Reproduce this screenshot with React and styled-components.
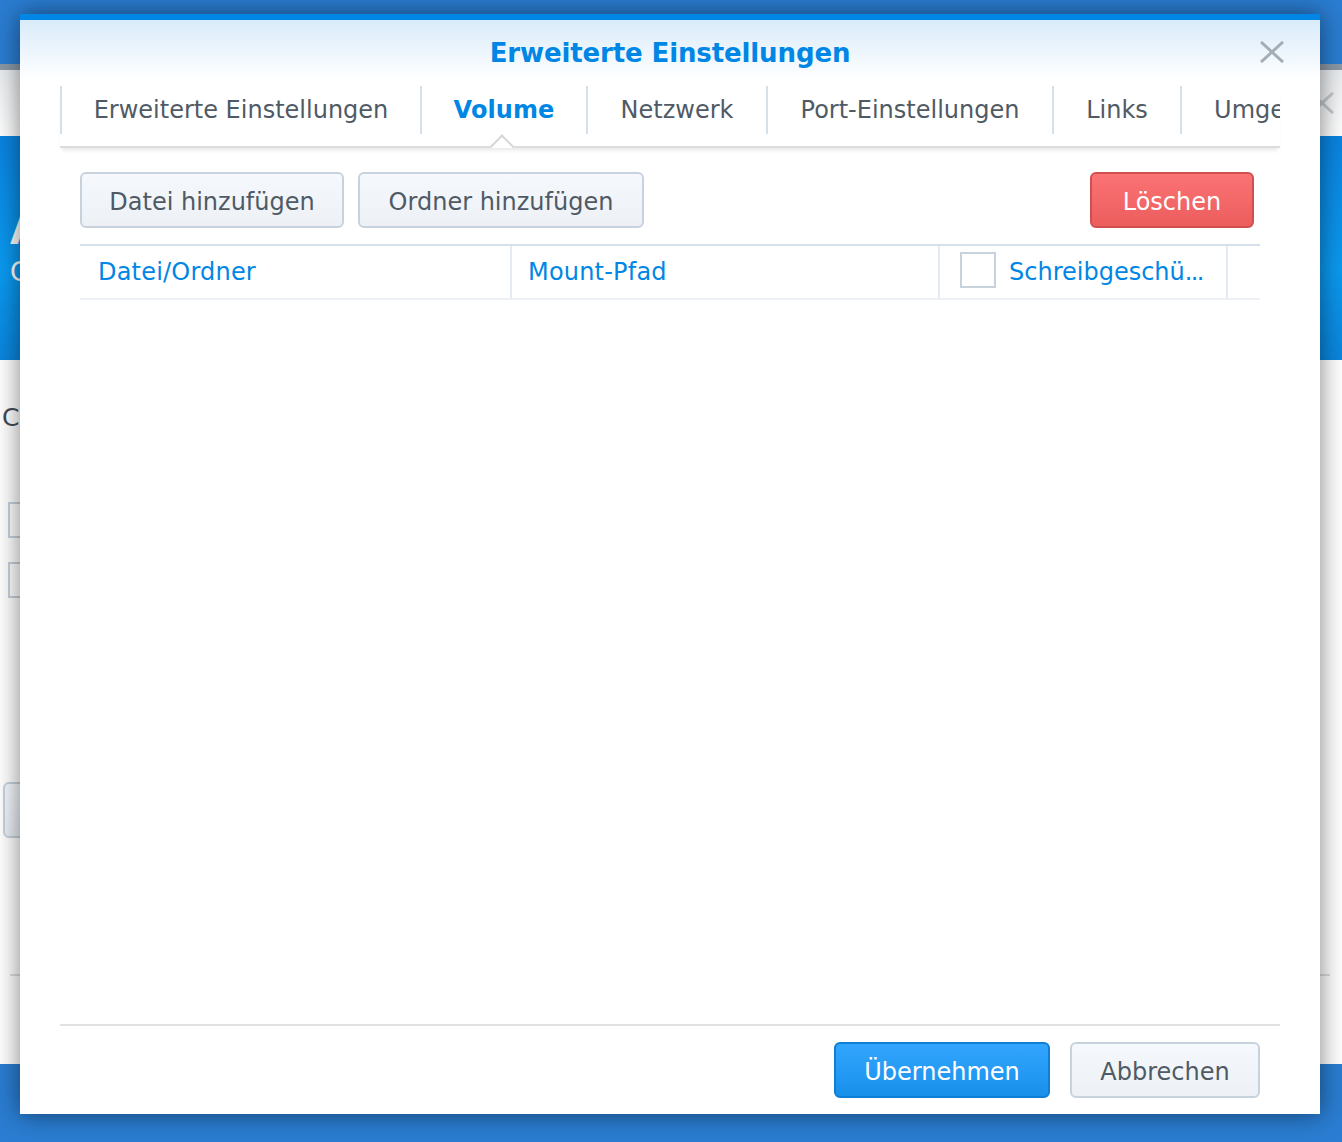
import styled, { createGlobalStyle } from "styled-components";

const GlobalStyle = createGlobalStyle`
    html, body {
        margin: 0;
        height: 100%;
    }
    body {
        background: #2a7dd2;
        font-family: "DejaVu Sans", Verdana, sans-serif;
        overflow: hidden;
    }
`;

const TABS = [
    { label: "Erweiterte Einstellungen", width: 360 },
    { label: "Volume", width: 166, active: true },
    { label: "Netzwerk", width: 180 },
    { label: "Port-Einstellungen", width: 286 },
    { label: "Links", width: 128 },
    { label: "Umgebung", width: 198 },
];

function App() {
    return (
        <Desktop>
            <GlobalStyle />

            {/* window behind the dialog */}
            <BackWindow>
                <BackTitleBar>
                    <BackClose viewBox="0 0 24 22">
                        <path d="M1 1 L23 21 M23 1 L1 21" />
                    </BackClose>
                </BackTitleBar>
                <Banner>
                    <BannerTitle>A</BannerTitle>
                    <BannerSub>C</BannerSub>
                </Banner>
                <BackBody>
                    <BackLabel>C</BackLabel>
                    <BackCheck />
                    <BackCheck />
                    <BackButton />
                    <BackRule />
                </BackBody>
            </BackWindow>

            <Dialog>
                <DialogHead>
                    <DialogTitle>Erweiterte Einstellungen</DialogTitle>
                    <CloseButton viewBox="0 0 24 22">
                        <path d="M1 1 L23 21 M23 1 L1 21" />
                    </CloseButton>
                </DialogHead>

                <TabBar>
                    <TabStrip>
                        {TABS.map((tab) => (
                            <Tab key={tab.label} $width={tab.width} $active={tab.active}>{tab.label}</Tab>
                        ))}
                    </TabStrip>
                </TabBar>

                <Content>
                    <Toolbar>
                        <Button $width={264}>Datei hinzufügen</Button>
                        <Button $width={286}>Ordner hinzufügen</Button>
                        <DangerButton $width={164}>Löschen</DangerButton>
                    </Toolbar>
                    <GridHeader>
                        <HeaderCell>Datei/Ordner</HeaderCell>
                        <HeaderCell>Mount-Pfad</HeaderCell>
                        <HeaderCell $check>
                            <CheckBox />
                            <HeaderText>Schreibgeschü<Dots>...</Dots></HeaderText>
                        </HeaderCell>
                        <HeaderCell />
                    </GridHeader>
                </Content>

                <Footer>
                    <PrimaryButton $width={216}>Übernehmen</PrimaryButton>
                    <Button $width={190}>Abbrechen</Button>
                </Footer>
            </Dialog>
        </Desktop>
    );
}

const Desktop = styled.div`
    position: relative;
    width: 1342px;
    height: 1142px;
    padding-top: 64px;
    box-sizing: border-box;
    overflow: hidden;
    background: #2a7dd2;
`;

const BackWindow = styled.div`
    height: 1000px;
    background: #fff;
    display: flex;
    flex-direction: column;
`;

const BackTitleBar = styled.div`
    height: 72px;
    box-sizing: border-box;
    border-top: 6px solid #8b98a6;
    background: linear-gradient(#e9ecef, #fff);
    display: flex;
    justify-content: flex-end;
    align-items: center;
    padding-right: 8px;
`;

const BackClose = styled.svg`
    width: 24px;
    height: 22px;
    fill: none;
    stroke: #c4cad0;
    stroke-width: 3;
`;

const Banner = styled.div`
    height: 224px;
    background: linear-gradient(#0a84e0, #0a9af0 60%, #0a85dd);
    color: #fff;
    padding-left: 10px;
    overflow: hidden;
`;

const BannerTitle = styled.div`
    font-size: 40px;
    font-weight: 700;
    line-height: 48px;
    margin-top: 70px;
`;

const BannerSub = styled.div`
    font-size: 26px;
    line-height: 30px;
    margin-top: 3px;
`;

const BackBody = styled.div`
    flex: 1;
    display: flex;
    flex-direction: column;
    align-items: flex-start;
    padding: 44px 0 0 2px;
`;

const BackLabel = styled.div`
    font-size: 25px;
    line-height: 28px;
    color: #414b55;
`;

const BackCheck = styled.div`
    width: 36px;
    height: 36px;
    box-sizing: border-box;
    border: 2px solid #c8d2dd;
    margin: 0 0 24px 6px;

    ${BackLabel} + & {
        margin-top: 70px;
    }
`;

const BackButton = styled.div`
    width: 200px;
    height: 56px;
    box-sizing: border-box;
    margin: 160px 0 0 1px;
    border: 2px solid #c8d2dd;
    border-radius: 6px;
    background: linear-gradient(#f4f8fc, #e9eef4);
`;

const BackRule = styled.div`
    align-self: stretch;
    height: 2px;
    margin: 136px 12px 0 8px;
    background: #dcdfe3;
`;

const Dialog = styled.div`
    position: absolute;
    top: 14px;
    left: 20px;
    width: 1300px;
    height: 1100px;
    box-sizing: border-box;
    border-top: 6px solid #0086e5;
    background: linear-gradient(#d9ebfa, #fff 60px);
    box-shadow: 0 0 24px rgba(0, 0, 0, 0.5);
    padding: 0 40px;
    display: flex;
    flex-direction: column;
`;

const DialogHead = styled.div`
    position: relative;
    height: 66px;
    display: flex;
    justify-content: center;
    align-items: center;
`;

const DialogTitle = styled.h1`
    margin: 0;
    font-size: 26px;
    letter-spacing: -0.12px;
    font-weight: 700;
    color: #0086e5;
`;

const CloseButton = styled.svg`
    position: absolute;
    right: -4px;
    top: 21px;
    width: 24px;
    height: 22px;
    fill: none;
    stroke: #a4adb5;
    stroke-width: 3;
`;

const TabBar = styled.div`
    height: 62px;
    box-sizing: border-box;
    flex-shrink: 0;
    border-bottom: 2px solid #dcdcdc;
    box-shadow: 0 4px 4px -2px rgba(0, 0, 0, 0.1);
`;

const TabStrip = styled.div`
    height: 62px;
    display: flex;
    overflow: hidden;
`;

const Tab = styled.div`
    position: relative;
    width: ${(props) => props.$width}px;
    height: 48px;
    box-sizing: border-box;
    flex-shrink: 0;
    border-left: 2px solid #d5e0eb;
    text-align: center;
    white-space: nowrap;
    font-size: 24px;
    line-height: 48px;
    font-weight: ${(props) => (props.$active ? 700 : 400)};
    letter-spacing: ${(props) => (props.$active ? "0.1px" : "0")};
    color: ${(props) => (props.$active ? "#0086e5" : "#4f5a65")};

    ${(props) => props.$active && `
        &::after {
            content: "";
            position: absolute;
            top: 52px;
            left: calc(50% - 11px);
            width: 18px;
            height: 18px;
            box-sizing: border-box;
            background: #fff;
            border-top: 2px solid #d6d6d6;
            border-left: 2px solid #d6d6d6;
            transform: rotate(45deg);
        }
    `}
`;

const Content = styled.div`
    flex: 1;
    padding: 24px 20px 0;
    display: flex;
    flex-direction: column;
    gap: 16px;
`;

const Toolbar = styled.div`
    display: flex;
    gap: 14px;
    padding-right: 6px;
`;

const Button = styled.button`
    width: ${(props) => props.$width}px;
    height: 56px;
    box-sizing: border-box;
    padding: 4px 0 0;
    border: 2px solid #c8d2dd;
    border-radius: 6px;
    background: linear-gradient(#f5f9fd, #edf1f6);
    font-family: inherit;
    font-size: 24px;
    color: #4f5a65;
`;

const DangerButton = styled(Button)`
    margin-left: auto;
    border-color: #d24f50;
    background: linear-gradient(#fb7375, #ec5d5d);
    color: #fff;
`;

const PrimaryButton = styled(Button)`
    border-color: #0f7fd6;
    background: linear-gradient(#33a6ff, #1790ea);
    color: #fff;
`;

const GridHeader = styled.div`
    height: 56px;
    box-sizing: border-box;
    border-top: 2px solid #d5e0eb;
    border-bottom: 2px solid #edf1f5;
    display: grid;
    grid-template-columns: 432px 428px 288px 32px;
`;

const HeaderCell = styled.div`
    display: flex;
    align-items: center;
    gap: 13px;
    min-width: 0;
    box-sizing: border-box;
    padding-left: ${(props) => (props.$check ? "20px" : "16px")};
    border-right: 2px solid #e4ebf2;
    font-size: 24px;
    letter-spacing: 0.2px;
    color: #0086e5;

    &:first-child {
        padding-left: 18px;
    }

    &:last-child {
        border-right: none;
    }
`;

const HeaderText = styled.span`
    white-space: nowrap;
    min-width: 0;
    letter-spacing: 0;
`;

const Dots = styled.span`
    letter-spacing: -1.6px;
`;

const CheckBox = styled.div`
    width: 36px;
    height: 36px;
    flex-shrink: 0;
    box-sizing: border-box;
    border: 2px solid #c8d2dd;
    background: #fff;
    margin-top: -4px;
`;

const Footer = styled.div`
    height: 90px;
    box-sizing: border-box;
    border-top: 2px solid #dfe1e3;
    padding: 16px 20px 0 0;
    display: flex;
    justify-content: flex-end;
    gap: 20px;
`;

export default App;
